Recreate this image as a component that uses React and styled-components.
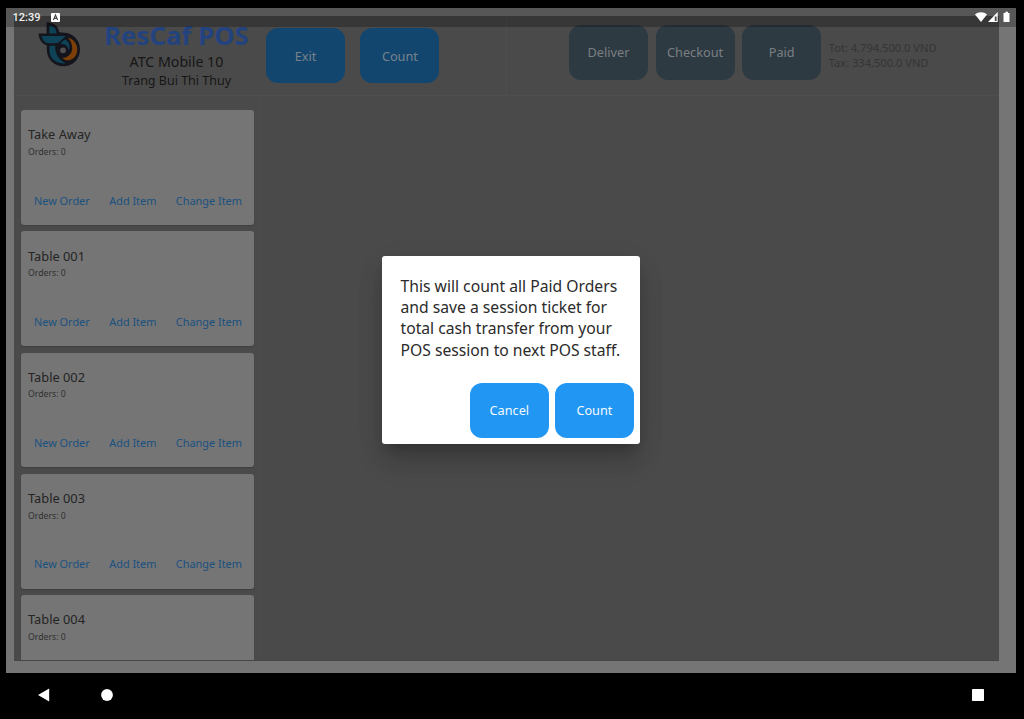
import React from "react";
import styled, { createGlobalStyle } from "styled-components";

const GlobalStyle = createGlobalStyle`
  * { box-sizing: border-box; }
  html, body { margin: 0; background: #000; overflow: hidden; }
  body { font-family: "Noto Sans", "Open Sans", sans-serif; }
`;

const Device = styled.div`
  position: relative;
  display: flex;
  flex-direction: column;
  width: 1024px;
  height: 719px;
  padding: 8px 8.5px 0 6px;
  background: #000;
  overflow: hidden;
`;

const Screen = styled.div`
  height: 665px;
  padding: 8px 16.5px 12px 8px;
  background: #757575;
`;

const AppBody = styled.div`
  display: flex;
  flex-direction: column;
  height: 645px;
  background: #4a4a4a;
  border-bottom: 1px solid #454545;
  overflow: hidden;
`;

const Header = styled.header`
  display: flex;
  height: 80px;
  flex: none;
  border-bottom: 1px solid #4e4e4e;
`;

const HeaderLeft = styled.div`
  display: flex;
  width: 493px;
  border-right: 1px solid #4e4e4e;
`;

const HeaderRight = styled.div`
  display: flex;
  padding: 9px 0 0 62px;
  gap: 7.6px;
`;

const Logo = styled.svg`
  width: 44px;
  height: 48px;
  margin: 4.6px 0 0 22.7px;
  flex: none;
`;

const Identity = styled.div`
  display: flex;
  flex-direction: column;
  align-items: center;
  width: 163px;
  margin-left: 14.3px;
  padding-top: 1px;
  white-space: nowrap;
`;

const Brand = styled.div`
  font-size: 25.8px;
  font-weight: 700;
  line-height: 36px;
  color: #23437f;
`;

const Company = styled.div`
  font-size: 14.2px;
  line-height: 18px;
  color: #161616;
`;

const Person = styled.div`
  font-size: 12.5px;
  line-height: 19px;
  color: #161616;
`;

const Actions = styled.div`
  display: flex;
  gap: 15.4px;
  padding: 12.3px 0 0 8px;
`;

const tones = {
  dimBlue: ["#12466f", "#77828c"],
  slate: ["#2d3a42", "#7b7f82"],
  blue: ["#2196f3", "#f3f9ff"],
};

const Button = styled.button`
  width: 79px;
  height: 55px;
  padding: 0 0 ${(p) => p.$lift || 0}px;
  border: 0;
  border-radius: 12px;
  font-family: inherit;
  font-size: 12.7px;
  line-height: 18px;
  background: ${(p) => tones[p.$tone][0]};
  color: ${(p) => tones[p.$tone][1]};
`;

const Totals = styled.div`
  padding-top: 14.6px;
  font-size: 11.1px;
  line-height: 15.7px;
  white-space: nowrap;
  color: #353535;
`;

const Sidebar = styled.aside`
  display: flex;
  flex-direction: column;
  gap: 6.35px;
  flex: 1;
  min-height: 0;
  width: 247px;
  padding: 14.1px 6.3px 0 6.5px;
  border-right: 1px solid #4c4c4c;
  overflow: hidden;
`;

const Card = styled.article`
  flex: none;
  height: 114.9px;
  padding: 15.3px 7.5px 0;
  border-radius: 3px;
  background: #757575;
  box-shadow: 0 1px 1px #3f3f3f;
`;

const CardTitle = styled.div`
  font-size: 12.8px;
  line-height: 18px;
  color: #242424;
`;

const CardOrders = styled.div`
  margin-top: 2.6px;
  font-size: 8.7px;
  line-height: 13px;
  color: #303030;
`;

const CardLinks = styled.div`
  display: flex;
  gap: 19.5px;
  margin: 33.7px 0 0 6px;
  font-size: 10.9px;
  line-height: 16px;
  color: #1a5180;
  white-space: nowrap;
`;

const StatusBar = styled.div`
  position: absolute;
  top: 8px;
  left: 6px;
  width: 1009.5px;
  height: 19px;
  display: flex;
  align-items: center;
  justify-content: space-between;
  padding: 0 5px 0.6px 6.5px;
  background: rgba(0, 0, 0, 0.25);
`;

const Clock = styled.div`
  display: flex;
  align-items: center;
  gap: 11px;
  padding-top: 1px;
  font-family: Roboto, sans-serif;
  font-weight: 500;
  font-size: 11px;
  color: #f0f0f0;
`;

const NavBar = styled.nav`
  display: flex;
  align-items: center;
  height: 44px;
  padding: 0 32px;
`;

const NavIcon = styled.svg`
  width: 12px;
  height: 14px;
  margin-left: ${(p) => p.$gap || "0"};
`;

const DialogLayer = styled.div`
  position: absolute;
  inset: 0;
  display: flex;
  align-items: flex-start;
  justify-content: center;
  padding: 256.3px 2.5px 0 0;
`;

const Dialog = styled.div`
  display: flex;
  flex-direction: column;
  justify-content: space-between;
  width: 258.5px;
  height: 187.5px;
  padding: 19.6px 6.1px 6.1px 19px;
  border-radius: 3px;
  background: #fff;
  box-shadow: 0 9px 12px -5px rgba(0, 0, 0, 0.2), 0 19px 26px 0 rgba(0, 0, 0, 0.14), 0 7px 30px 2px rgba(0, 0, 0, 0.05);
`;

const Message = styled.p`
  margin: 0;
  font-size: 15.7px;
  line-height: 21.3px;
  white-space: nowrap;
  color: #2b2b2b;
`;

const DialogActions = styled.div`
  display: flex;
  justify-content: flex-end;
  gap: 6.1px;
`;

const tables = [
  { name: "Take Away" },
  { name: "Table 001" },
  { name: "Table 002" },
  { name: "Table 003" },
  { name: "Table 004", collapsed: true },
];

function TableCard({ name, collapsed }) {
  return (
    <Card>
      <CardTitle>{name}</CardTitle>
      <CardOrders>Orders: 0</CardOrders>
      {!collapsed && (
        <CardLinks>
          <span>New Order</span>
          <span>Add Item</span>
          <span>Change Item</span>
        </CardLinks>
      )}
    </Card>
  );
}

function BrandLogo() {
  return (
    <Logo viewBox="0 0 44 48">
      <path
        d="M9.6 1.3C16 1.8 21 4.2 22.3 11.3L30 12C38 14 43 20.5 43 28.5C43 37.8 35.8 45.3 26.5 45.3C17 45.3 9.8 38 9.8 28.5V24.4C5 22.6 1.8 18.5 1.6 12.4H9.6Z"
        fill="#14141c"
      />
      <path d="M12.4 4.2C17 5 19.4 7.6 19.5 12.6H12.4Z" fill="#0d4257" />
      <path d="M4.6 15H29.2C26 16.4 23.8 22 18.4 22.3H12C8 22.2 5.2 19 4.6 15Z" fill="#0d4257" />
      <path d="M12.4 24.8H18.2C18 31.6 20.6 38.2 28.6 42.2C19.2 43.6 12.2 37.2 12.4 29Z" fill="#0d4257" />
      <path d="M28.2 18.4C26.2 19.2 24.6 21.2 23.4 23.2C28 22.4 31.6 25.4 31.4 29.6C33.8 25.4 32.2 20.6 28.2 18.4Z" fill="#0d4257" />
      <path d="M30.6 16.4C36.8 18 40.6 23 40.3 29C40 35.8 34.6 40.2 29 39.2C27.6 38.8 26.2 38 25.2 36.8C31.6 36.6 35.4 32.4 35.2 26.4C35 22.4 33.4 19 30.6 16.4Z" fill="#7d3f08" />
      <circle cx="26" cy="29.3" r="2.9" fill="#505050" />
    </Logo>
  );
}

export default function App() {
  return (
    <Device>
      <GlobalStyle />
      <Screen>
        <AppBody>
          <Header>
            <HeaderLeft>
              <BrandLogo />
              <Identity>
                <Brand>ResCaf POS</Brand>
                <Company>ATC Mobile 10</Company>
                <Person>Trang Bui Thi Thuy</Person>
              </Identity>
              <Actions>
                <Button $tone="dimBlue">Exit</Button>
                <Button $tone="dimBlue">Count</Button>
              </Actions>
            </HeaderLeft>
            <HeaderRight>
              <Button $tone="slate" $lift={2}>Deliver</Button>
              <Button $tone="slate" $lift={2}>Checkout</Button>
              <Button $tone="slate" $lift={2}>Paid</Button>
              <Totals>
                <div>Tot: 4,794,500.0 VND</div>
                <div>Tax: 334,500.0 VND</div>
              </Totals>
            </HeaderRight>
          </Header>
          <Sidebar>
            {tables.map((table) => (
              <TableCard key={table.name} {...table} />
            ))}
          </Sidebar>
        </AppBody>
      </Screen>
      <NavBar>
        <NavIcon viewBox="0 0 12 14">
          <path d="M11.2 0.5V13.5L0 7Z" fill="#fff" />
        </NavIcon>
        <NavIcon viewBox="0 0 12 14" $gap="51px">
          <circle cx="6" cy="7" r="5.9" fill="#fff" />
        </NavIcon>
        <NavIcon viewBox="0 0 12 14" $gap="auto">
          <rect y="1" width="12" height="12" rx="0.7" fill="#fff" />
        </NavIcon>
      </NavBar>
      <StatusBar>
        <Clock>
          <span>12:39</span>
          <svg width="9" height="9" viewBox="0 0 9 9">
            <rect width="9" height="9" rx="1" fill="#fff" />
            <path d="M2.4 7L4.5 2L6.6 7M3.2 5.4H5.8" fill="none" stroke="#444" strokeWidth="1.1" />
          </svg>
        </Clock>
        <svg width="36" height="12" viewBox="0 0 36 12">
          <path d="M0 3.4C3.2 0.5 8.8 0.5 12 3.4L6 11Z" fill="#fff" />
          <path d="M22.7 1V11H13Z" fill="#fff" />
          <path d="M19.8 5.5H21.6V10H19.8Z" fill="#4a4a4a" />
          <path d="M28.5 2H30.3V0.8H33V2H34.5V11H28.5Z" fill="#fff" />
        </svg>
      </StatusBar>
      <DialogLayer>
        <Dialog role="dialog">
          <Message>
            This will count all Paid Orders
            <br />
            and save a session ticket for
            <br />
            total cash transfer from your
            <br />
            POS session to next POS staff.
          </Message>
          <DialogActions>
            <Button $tone="blue">Cancel</Button>
            <Button $tone="blue">Count</Button>
          </DialogActions>
        </Dialog>
      </DialogLayer>
    </Device>
  );
}
